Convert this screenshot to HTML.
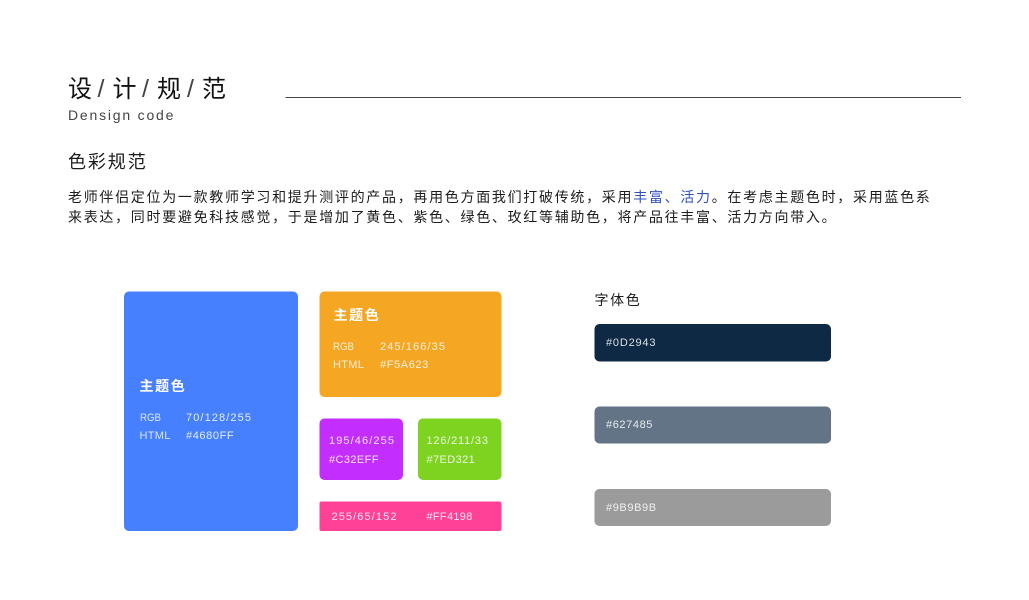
<!DOCTYPE html>
<html lang="zh">
<head>
<meta charset="utf-8">
<style>
html,body{margin:0;padding:0;background:#fff;}
body{position:relative;width:1029px;height:600px;overflow:hidden;font-family:"Liberation Sans","Noto Sans CJK SC",sans-serif;color:#222;}
.a{position:absolute;white-space:nowrap;}
.tt{position:absolute;top:74px;font-size:24px;line-height:32px;color:#111;white-space:nowrap;}
.sl{position:absolute;top:73px;font-size:25px;line-height:32px;color:#444;white-space:nowrap;}
.t{position:absolute;white-space:nowrap;color:rgba(255,255,255,.85);font-size:11px;letter-spacing:1.1px;line-height:14px;}
.l{position:absolute;white-space:nowrap;color:rgba(255,255,255,.8);font-size:11px;line-height:14px;transform-origin:left center;}
.h{position:absolute;white-space:nowrap;color:#fff;font-size:14px;letter-spacing:1.6px;line-height:20px;font-weight:700;}
svg{position:absolute;left:0;top:0;}
</style>
</head>
<body>
<svg width="1029" height="600" viewBox="0 0 1029 600">
<rect x="285.5" y="97" width="675.5" height="1" fill="#444"/>
<rect x="124" y="291.5" width="174" height="239.5" rx="5" fill="#4680ff"/>
<rect x="319.5" y="291.5" width="182" height="105.5" rx="5" fill="#f5a623"/>
<rect x="319.5" y="418.5" width="83.5" height="61.5" rx="5" fill="#c32eff"/>
<rect x="418" y="418.5" width="83.5" height="61.5" rx="5" fill="#7ed321"/>
<rect x="319.5" y="501.5" width="182" height="29.5" rx="2" fill="#ff4198"/>
<rect x="594.5" y="324" width="236.5" height="37.5" rx="5" fill="#0d2943"/>
<rect x="594.5" y="406.5" width="236.5" height="37" rx="5" fill="#627485"/>
<rect x="594.5" y="489" width="236.5" height="37" rx="5" fill="#9b9b9b"/>
</svg>

<div class="tt" style="left:68px;">设</div>
<div class="sl" style="left:97.5px;">/</div>
<div class="tt" style="left:112.5px;">计</div>
<div class="sl" style="left:142px;">/</div>
<div class="tt" style="left:157px;">规</div>
<div class="sl" style="left:187px;">/</div>
<div class="tt" style="left:202px;">范</div>

<div class="a" style="left:68px;top:106px;font-size:14px;line-height:18px;letter-spacing:1.8px;color:#444;">Densign code</div>
<div class="a" style="left:68px;top:150px;font-size:18px;line-height:24px;letter-spacing:1.9px;color:#1c1c1c;">色彩规范</div>
<div class="a" style="left:68px;top:187px;font-size:14px;line-height:20px;letter-spacing:1.7px;color:#1c1c1c;">老师伴侣定位为一款教师学习和提升测评的产品，再用色方面我们打破传统，采用<span style="color:#2f4fc0;">丰富、活力</span>。在考虑主题色时，采用蓝色系</div>
<div class="a" style="left:68px;top:207px;font-size:14px;line-height:20px;letter-spacing:1.7px;color:#1c1c1c;">来表达，同时要避免科技感觉，于是增加了黄色、紫色、绿色、玫红等辅助色，将产品往丰富、活力方向带入。</div>

<div class="h" style="left:139.5px;top:376px;">主题色</div>
<div class="l" style="left:139.5px;top:411px;transform:scaleX(.88);">RGB</div>
<div class="t" style="left:186px;top:411px;">70/128/255</div>
<div class="l" style="left:139.5px;top:429px;letter-spacing:.3px;">HTML</div>
<div class="t" style="left:186px;top:429px;letter-spacing:.6px;">#4680FF</div>

<div class="h" style="left:333.5px;top:305px;">主题色</div>
<div class="l" style="left:333px;top:340px;transform:scaleX(.88);">RGB</div>
<div class="t" style="left:380px;top:340px;">245/166/35</div>
<div class="l" style="left:333px;top:358px;letter-spacing:.3px;">HTML</div>
<div class="t" style="left:380px;top:358px;letter-spacing:.6px;">#F5A623</div>

<div class="t" style="left:329px;top:434px;">195/46/255</div>
<div class="t" style="left:329px;top:453px;letter-spacing:.4px;">#C32EFF</div>

<div class="t" style="left:426.5px;top:434px;letter-spacing:.8px;">126/211/33</div>
<div class="t" style="left:426.5px;top:453px;letter-spacing:.4px;">#7ED321</div>

<div class="t" style="left:331.5px;top:510px;">255/65/152</div>
<div class="t" style="left:426.5px;top:510px;letter-spacing:.3px;">#FF4198</div>

<div class="a" style="left:594.5px;top:290px;font-size:14px;line-height:20px;letter-spacing:1.6px;color:#1c1c1c;">字体色</div>
<div class="t" style="left:606px;top:336px;letter-spacing:.8px;">#0D2943</div>
<div class="t" style="left:606px;top:418px;letter-spacing:.6px;">#627485</div>
<div class="t" style="left:606px;top:501px;letter-spacing:.6px;">#9B9B9B</div>
</body>
</html>
